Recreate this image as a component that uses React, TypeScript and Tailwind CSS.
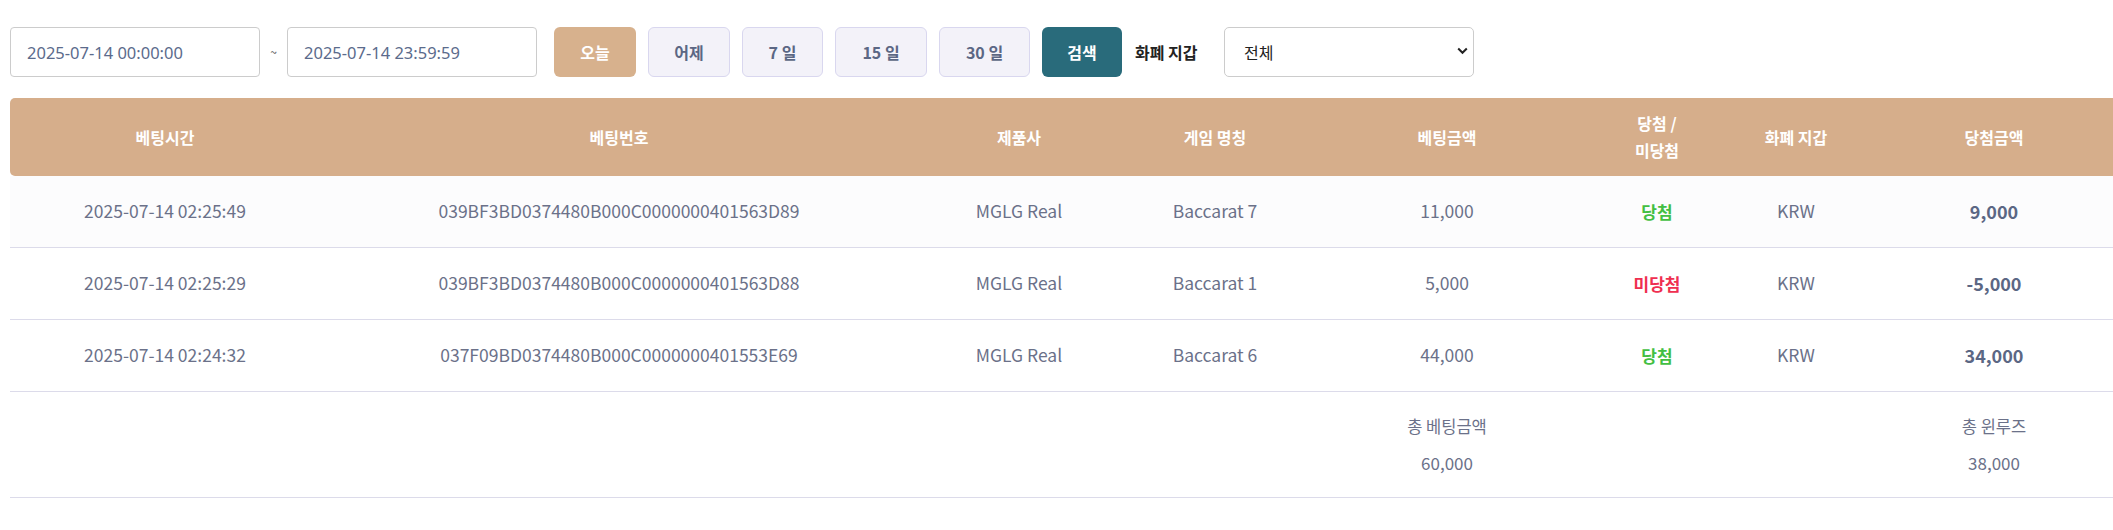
import React from "react";

const FONT = { fontFamily: '"Noto Sans CJK KR", "Noto Sans", sans-serif' };

type Row = {
  time: string;
  id: string;
  vendor: string;
  game: string;
  bet: string;
  win: boolean;
  currency: string;
  amount: string;
};

const rows: Row[] = [
  { time: "2025-07-14 02:25:49", id: "039BF3BD0374480B000C0000000401563D89", vendor: "MGLG Real", game: "Baccarat 7", bet: "11,000", win: true, currency: "KRW", amount: "9,000" },
  { time: "2025-07-14 02:25:29", id: "039BF3BD0374480B000C0000000401563D88", vendor: "MGLG Real", game: "Baccarat 1", bet: "5,000", win: false, currency: "KRW", amount: "-5,000" },
  { time: "2025-07-14 02:24:32", id: "037F09BD0374480B000C0000000401553E69", vendor: "MGLG Real", game: "Baccarat 6", bet: "44,000", win: true, currency: "KRW", amount: "34,000" },
];

const GRID = "grid grid-cols-[310px_598px_202px_190px_274px_146px_132px_264px] w-[2116px]";

function GrayBtn({ label, w }: { label: string; w: string }) {
  return (
    <button
      className={`${w} h-[50px] rounded-[6px] border border-[#d9d7ef] bg-[#f3f2f9] text-[16px] font-bold text-[#5b6784] flex items-center justify-center`}
    >
      {label}
    </button>
  );
}

export default function App() {
  return (
    <div className="w-full overflow-hidden bg-white min-h-[530px]" style={FONT}>
      {/* filter bar */}
      <div className="flex items-center pt-[27px] pl-[10px]">
        <input
          readOnly
          value="2025-07-14 00:00:00"
          className="w-[250px] h-[50px] rounded-[4px] border border-[#cccccc] pl-[16px] text-[16.5px] text-[#5b6b8c] outline-none"
          style={{ fontFamily: '"Noto Sans", sans-serif' }}
        />
        <span className="w-[27px] text-center text-[12px] text-[#555]">~</span>
        <input
          readOnly
          value="2025-07-14 23:59:59"
          className="w-[250px] h-[50px] rounded-[4px] border border-[#cccccc] pl-[16px] text-[16.5px] text-[#5b6b8c] outline-none"
          style={{ fontFamily: '"Noto Sans", sans-serif' }}
        />
        <div className="flex items-center gap-[12px] ml-[17px]">
          <button className="w-[82px] h-[50px] rounded-[6px] bg-[#d7b18d] text-[16px] font-bold text-white flex items-center justify-center">
            오늘
          </button>
          <GrayBtn label="어제" w="w-[82px]" />
          <GrayBtn label="7 일" w="w-[81px]" />
          <GrayBtn label="15 일" w="w-[92px]" />
          <GrayBtn label="30 일" w="w-[91px]" />
          <button className="w-[80px] h-[50px] rounded-[6px] bg-[#296b7b] text-[16px] font-bold text-white flex items-center justify-center">
            검색
          </button>
        </div>
        <span className="ml-[13px] w-[68px] whitespace-nowrap text-[16px] font-bold text-[#222222]">화폐 지갑</span>
        <div className="relative ml-[21px] w-[250px] h-[50px]">
          <div className="w-full h-full rounded-[5px] border border-[#cccccc] pl-[19px] flex items-center text-[16px] text-[#222222]">
            전체
          </div>
          <svg
            className="absolute right-[6px] top-[20px]"
            width="11"
            height="8"
            viewBox="0 0 11 8"
            fill="none"
          >
            <path d="M1.2 1.5 L5.5 5.8 L9.8 1.5" stroke="#222" strokeWidth="2" />
          </svg>
        </div>
      </div>

      {/* table */}
      <div className="ml-[10px] mt-[21px]">
        <div className={`${GRID} h-[78px] bg-[#d6ae8b] rounded-[5px] text-white font-bold text-[16px] leading-[27px]`}>
          {["베팅시간", "베팅번호", "제품사", "게임 명칭", "베팅금액", "당첨 /\n미당첨", "화폐 지갑", "당첨금액"].map((h, i) => (
            <div key={i} className="flex items-center justify-center text-center whitespace-pre-line">
              {h}
            </div>
          ))}
        </div>
        {rows.map((r, i) => (
          <div
            key={i}
            className={`${GRID} h-[72px] border-b border-[#dcdbea] text-[17.5px] text-[#6b7189] ${i === 0 ? "bg-[#fcfcfd]" : "bg-white"}`}
          >
            <div className="flex items-center justify-center">{r.time}</div>
            <div className="flex items-center justify-center">{r.id}</div>
            <div className="flex items-center justify-center">{r.vendor}</div>
            <div className="flex items-center justify-center">{r.game}</div>
            <div className="flex items-center justify-center">{r.bet}</div>
            <div className={`flex items-center justify-center font-bold text-[17px] ${r.win ? "text-[#43bf43]" : "text-[#ef2f50]"}`}>
              {r.win ? "당첨" : "미당첨"}
            </div>
            <div className="flex items-center justify-center">{r.currency}</div>
            <div className="flex items-center justify-center font-bold text-[#5b6784] text-[18px]">{r.amount}</div>
          </div>
        ))}
        <div className={`${GRID} h-[106px] border-b border-[#dcdbea] text-[16.5px] text-[#6b7189]`}>
          <div />
          <div />
          <div />
          <div />
          <div className="flex flex-col items-center justify-center gap-[11px]">
            <span>총 베팅금액</span>
            <span className="text-[17px]">60,000</span>
          </div>
          <div />
          <div />
          <div className="flex flex-col items-center justify-center gap-[11px]">
            <span>총 윈루즈</span>
            <span className="text-[17px]">38,000</span>
          </div>
        </div>
      </div>
    </div>
  );
}
